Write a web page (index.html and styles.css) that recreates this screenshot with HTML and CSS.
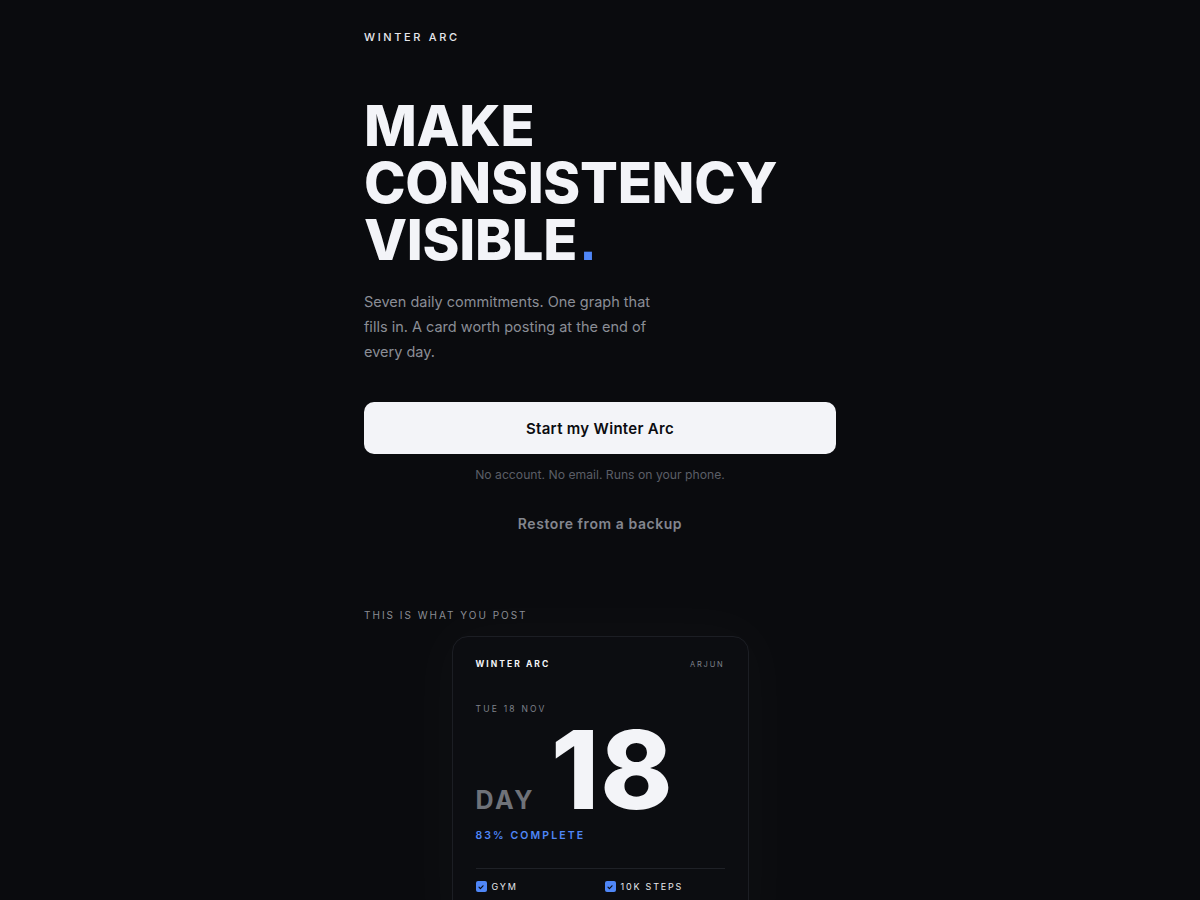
FILE: index.html
```html
<!DOCTYPE html>
<html lang="en">
<head>
<meta charset="utf-8">
<title>Winter Arc</title>
<link rel="stylesheet" href="styles.css">
</head>
<body>
<main class="page">
  <header class="brand">WINTER ARC</header>
  <section class="hero">
    <h1 class="headline">MAKE<br>CONSISTENCY<br>VISIBLE<span class="dot">.</span></h1>
    <p class="lede">Seven daily commitments. One graph that fills in. A card worth posting at the end of every day.</p>
    <button class="cta">Start my Winter Arc</button>
    <p class="note">No account. No email. Runs on your phone.</p>
    <button class="restore">Restore from a backup</button>
  </section>
  <section class="preview">
    <div class="eyebrow">THIS IS WHAT YOU POST</div>
    <div class="card">
      <div class="card-top">
        <span class="card-brand">WINTER ARC</span>
        <span class="card-user">ARJUN</span>
      </div>
      <div class="card-date">TUE 18 NOV</div>
      <div class="card-day">
        <span class="day-label">DAY</span>
        <span class="day-num">18</span>
      </div>
      <div class="card-pct">83% COMPLETE</div>
      <div class="card-rule"></div>
      <ul class="checks">
        <li><span class="box"><svg viewBox="0 0 10 10" width="10" height="10"><path d="M3 5.2 L4.4 6.6 L7 3.8" fill="none" stroke="#0b0c10" stroke-width="1.2" stroke-linecap="round" stroke-linejoin="round"/></svg></span>GYM</li>
        <li><span class="box"><svg viewBox="0 0 10 10" width="10" height="10"><path d="M3 5.2 L4.4 6.6 L7 3.8" fill="none" stroke="#0b0c10" stroke-width="1.2" stroke-linecap="round" stroke-linejoin="round"/></svg></span>10K STEPS</li>
        <li><span class="box"><svg viewBox="0 0 10 10" width="10" height="10"><path d="M3 5.2 L4.4 6.6 L7 3.8" fill="none" stroke="#0b0c10" stroke-width="1.2" stroke-linecap="round" stroke-linejoin="round"/></svg></span>READ</li>
        <li><span class="box"><svg viewBox="0 0 10 10" width="10" height="10"><path d="M3 5.2 L4.4 6.6 L7 3.8" fill="none" stroke="#0b0c10" stroke-width="1.2" stroke-linecap="round" stroke-linejoin="round"/></svg></span>NO SUGAR</li>
      </ul>
    </div>
  </section>
</main>
</body>
</html>
```
FILE: styles.css
```css
* { box-sizing: border-box; }
html, body { margin: 0; padding: 0; }
body {
  background: #0a0b0e;
  color: #f3f4f8;
  font-family: Inter, "Noto Sans", sans-serif;
  -webkit-font-smoothing: antialiased;
}
.page {
  width: 472px;
  margin: 0 auto;
  padding-top: 30px;
}
.brand {
  font-size: 11px;
  font-weight: 500;
  letter-spacing: 0.24em;
  color: #e6e7ec;
  line-height: 14px;
}
.hero { padding-top: 54px; }
.headline {
  margin: 0;
  font-family: Inter, sans-serif;
  font-weight: 800;
  font-size: 56px;
  line-height: 57px;
  letter-spacing: -0.005em;
  color: #f3f4f8;
}
.dot {
  color: #4f86f7;
  font-family: "Liberation Sans", Arial, sans-serif;
  font-weight: 700;
  margin-left: 3px;
}
.lede {
  margin: 20px 0 0;
  width: 300px;
  font-size: 14.5px;
  line-height: 25px;
  color: #8b8e96;
}
.cta {
  display: block;
  width: 100%;
  height: 52px;
  margin-top: 38px;
  border: 0;
  border-radius: 10px;
  background: #f3f4f8;
  color: #0b0c10;
  font-family: Inter, sans-serif;
  font-size: 15px;
  font-weight: 600;
  letter-spacing: 0.02em;
}
.note {
  margin: 13px 0 0;
  text-align: center;
  font-size: 12.2px;
  line-height: 16px;
  color: #5b5e66;
}
.restore {
  display: block;
  margin: 31px auto 0;
  background: none;
  border: 0;
  font-family: Inter, sans-serif;
  font-size: 14px;
  font-weight: 600;
  letter-spacing: 0.04em;
  color: #83868e;
  line-height: 18px;
}
.preview { padding-top: 74px; }
.eyebrow {
  font-size: 10px;
  letter-spacing: 0.2em;
  color: #8a8d94;
  line-height: 14px;
}
.card {
  width: 297px;
  margin: 14px auto 0;
  border: 1px solid #1c1e24;
  border-radius: 16px;
  background: #0c0d11;
  padding: 22px 23px 24px;
  box-shadow: 0 0 60px 20px rgba(255,255,255,0.018);
}
.card-top {
  display: flex;
  justify-content: space-between;
  align-items: center;
}
.card-brand {
  font-size: 8.5px;
  font-weight: 700;
  letter-spacing: 0.24em;
  color: #f3f4f8;
}
.card-user {
  font-size: 7.5px;
  letter-spacing: 0.24em;
  color: #7e818a;
}
.card-date {
  margin-top: 35px;
  font-size: 8.5px;
  letter-spacing: 0.26em;
  color: #7e818a;
}
.card-day {
  display: flex;
  align-items: baseline;
  gap: 16px;
  margin-top: 9px;
  height: 92px;
}
.day-label {
  font-size: 25px;
  font-weight: 700;
  letter-spacing: 0.1em;
  color: #6f7279;
}
.day-num {
  font-size: 109px;
  font-weight: 800;
  line-height: 92px;
  letter-spacing: 0.01em;
  color: #f3f4f8;
}
.card-pct {
  margin-top: 14px;
  font-size: 10.5px;
  font-weight: 600;
  letter-spacing: 0.2em;
  color: #4f86f7;
}
.card-rule {
  height: 1px;
  background: #1f2127;
  margin-top: 26px;
}
.checks {
  list-style: none;
  margin: 12px 0 0;
  padding: 0;
  display: grid;
  grid-template-columns: 120px 120px;
  column-gap: 9px;
  row-gap: 10px;
}
.checks li {
  display: flex;
  align-items: center;
  gap: 5px;
  font-size: 9px;
  font-weight: 400;
  letter-spacing: 0.2em;
  color: #e6e7ec;
}
.box {
  width: 11px;
  height: 11px;
  border-radius: 2px;
  background: #4f86f7;
  display: inline-flex;
  align-items: center;
  justify-content: center;
}
```
